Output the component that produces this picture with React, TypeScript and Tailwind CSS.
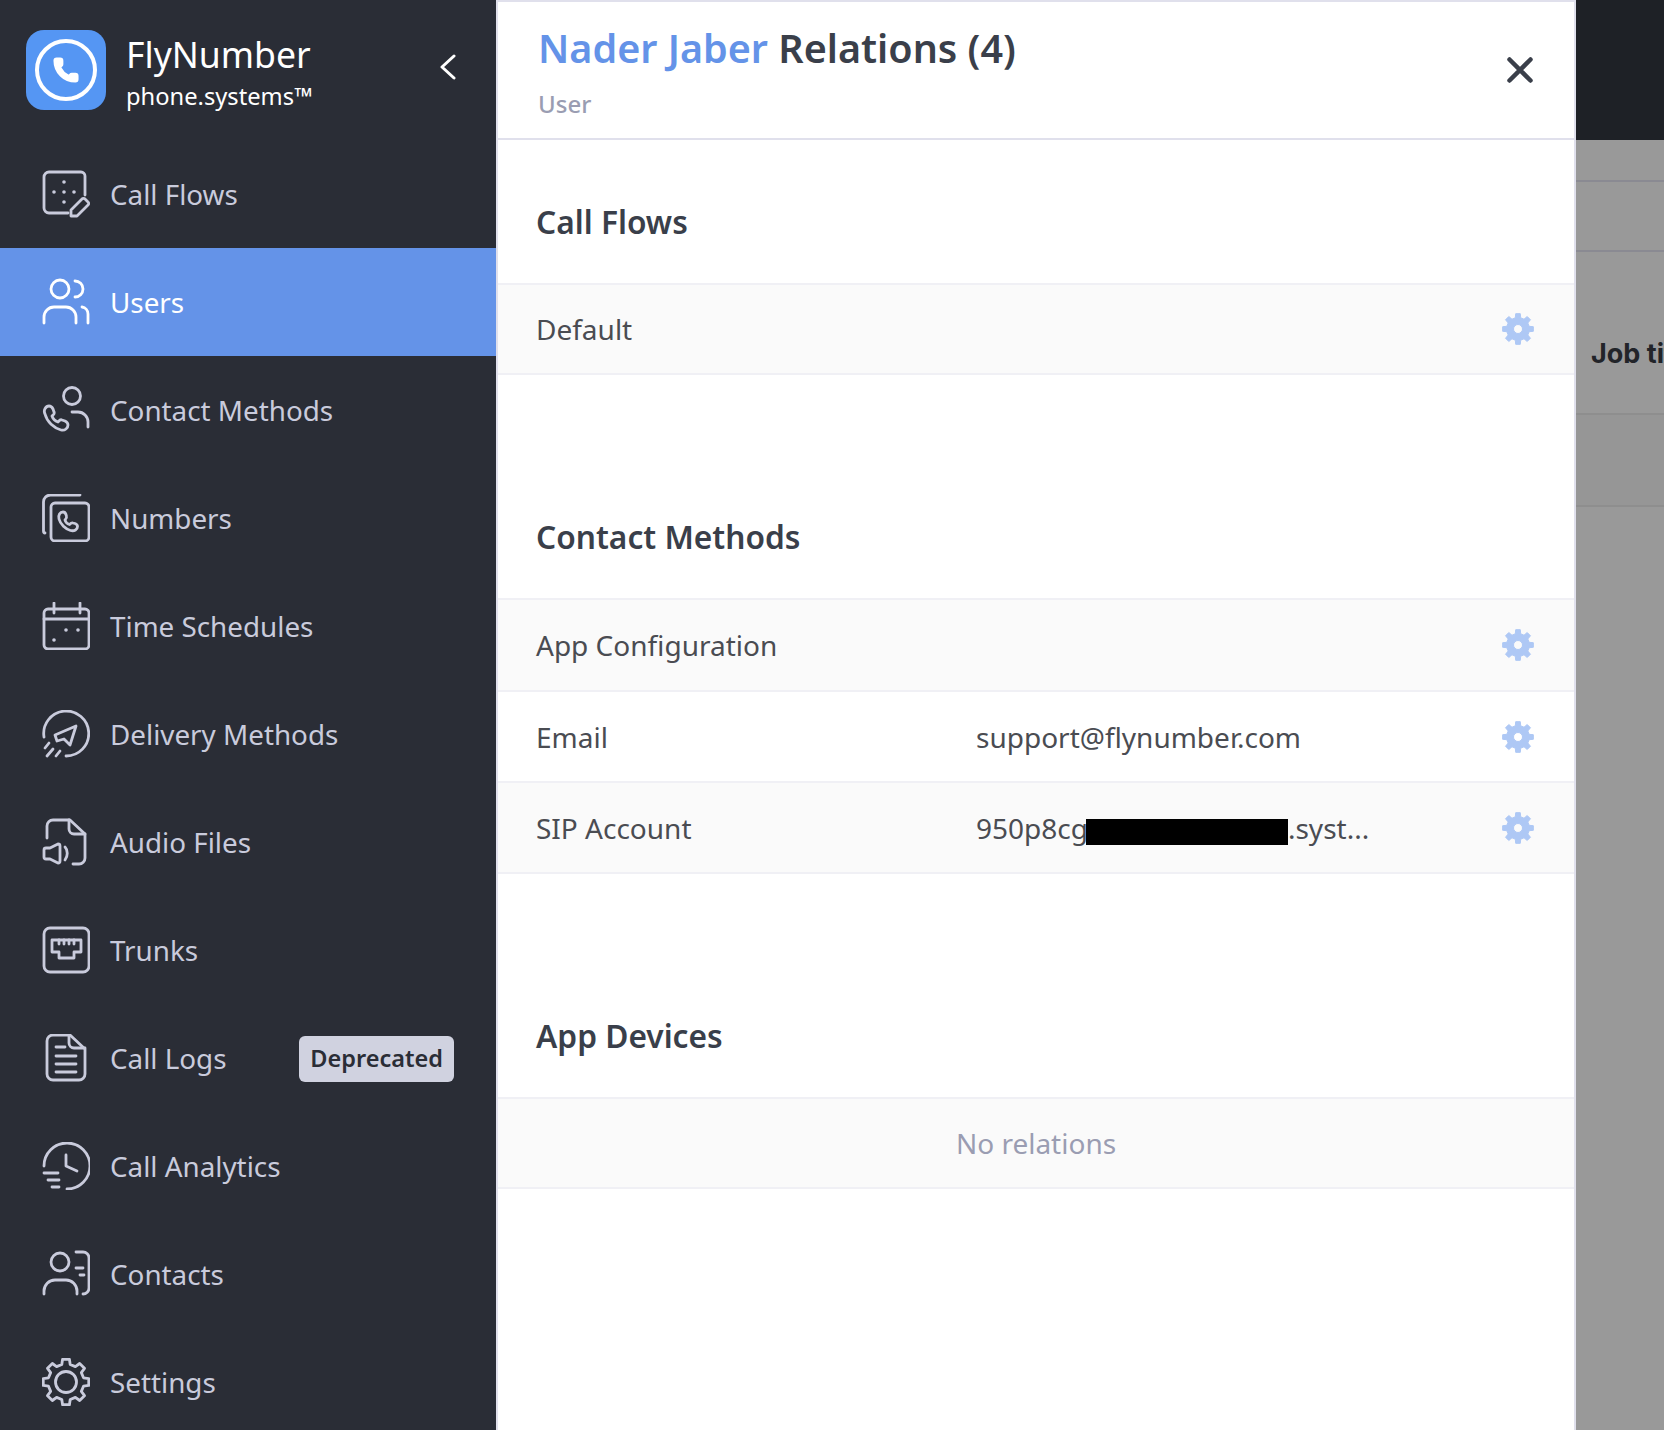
import React from "react";
import { Phone } from "lucide-react";

const gearPath = (teeth: number, cx: number, cy: number, outer: number, inner: number) => {
  const pts: string[] = [];
  const step = (Math.PI * 2) / teeth;
  for (let i = 0; i < teeth; i++) {
    const a = i * step - Math.PI / 2;
    const p = (r: number, da: number) =>
      `${(cx + r * Math.cos(a + da)).toFixed(2)} ${(cy + r * Math.sin(a + da)).toFixed(2)}`;
    pts.push(
      `${i === 0 ? "M" : "L"}${p(inner, -step * 0.3)}`,
      `L${p(outer, -step * 0.19)}`,
      `L${p(outer, step * 0.19)}`,
      `L${p(inner, step * 0.3)}`,
    );
  }
  return pts.join(" ") + "Z";
};

const Icon = ({ children }: { children: React.ReactNode }) => (
  <svg
    viewBox="0 0 48 48"
    fill="none"
    stroke="currentColor"
    strokeWidth="2.8"
    strokeLinecap="round"
    strokeLinejoin="round"
    className="h-12 w-12 shrink-0"
  >
    {children}
  </svg>
);

const Dot = ({ x, y }: { x: number; y: number }) => (
  <circle cx={x} cy={y} r="1.8" fill="currentColor" stroke="none" />
);

const icons: Record<string, React.ReactNode> = {
  flows: (
    <>
      <path d="M26 43H7a5 5 0 0 1-5-5V7a5 5 0 0 1 5-5h32a4 4 0 0 1 4 4v19" />
      <path d="M29 46v-6l11-11a2 2 0 0 1 3 0l3 3a2 2 0 0 1 0 3L35 46z" />
      <Dot x={22} y={12} />
      <Dot x={12} y={22} />
      <Dot x={22} y={22} />
      <Dot x={32} y={22} />
      <Dot x={22} y={32} />
    </>
  ),
  users: (
    <>
      <circle cx="18" cy="11" r="9" />
      <path d="M33 3a8 8 0 0 1 0 16" />
      <path d="M2 45v-6a10 10 0 0 1 10-10h12a10 10 0 0 1 10 10v6" />
      <path d="M40 29a7 7 0 0 1 6 7v9" />
    </>
  ),
  contact: (
    <>
      <circle cx="30" cy="10" r="8.5" />
      <path d="M30 26h6a10 10 0 0 1 10 10v5" />
      <path d="M3 28c-2-4 1-8 4-8 2 0 3 1 4 3l1 3c1 2-1 3-2 4 1 3 3 5 6 6 1-1 2-3 4-2l3 1c2 1 3 2 3 4 0 3-3 6-7 5-7-2-14-8-16-16z" />
    </>
  ),
  numbers: (
    <>
      <path d="M3 39c-1 0-1.5-1-1.5-2V8a7 7 0 0 1 7-7H38" />
      <rect x="9" y="9" width="38" height="38" rx="4" />
      <path d="M17 25c-1-4 1-7 4-7 1.5 0 2.500 1 3 2.500l.5 2c.5 1.500-.5 2.500-1.500 3.500 .5 2 2.500 4 4.500 4.500 1-1 2-2 3.500-1.500l2 .5c1.500.5 2.500 1.500 2.500 3 0 3-3 5-7 4-5-1.500-10-6-11.500-11.500z" />
    </>
  ),
  time: (
    <>
      <rect x="2" y="7" width="45" height="40" rx="4" />
      <path d="M2 17h45M12 1v10M38 1v10" />
      <Dot x={24} y={28} />
      <Dot x={36} y={28} />
      <Dot x={12} y={38} />
    </>
  ),
  delivery: (
    <>
      <path d="M2 27a22.500 22.500 0 1 1 22 19" />
      <path d="M13 25l21-9-6 19-6-6-7 2z" />
      <path d="M3 38l4-5M5 46l6-7M14 46l4-5" />
    </>
  ),
  audio: (
    <>
      <path d="M5 20V8a6 6 0 0 1 6-6h17l15 14v24a6 6 0 0 1-6 6h-6" />
      <path d="M27 2v9a5 5 0 0 0 5 5h11" />
      <path d="M2 32a2 2 0 0 1 2-2h4l8-4a2 2 0 0 1 2 2v15a2 2 0 0 1-2 2l-8-4H4a2 2 0 0 1-2-2z" />
      <path d="M23 29c3 3 3 9 0 13" />
    </>
  ),
  trunks: (
    <>
      <rect x="2" y="2" width="45" height="44" rx="6" />
      <path d="M10 14h29v12h-7v6H17v-6h-7z" />
      <path d="M17 14v4M22 14v4M27 14v4M32 14v4" />
    </>
  ),
  logs: (
    <>
      <path d="M28 1H11a6 6 0 0 0-6 6v33a6 6 0 0 0 6 6h26a6 6 0 0 0 6-6V15z" />
      <path d="M27 1v8a5 5 0 0 0 5 5h11" />
      <path d="M14 13h9M14 22h20M14 30h20M14 38h20" />
    </>
  ),
  analytics: (
    <>
      <path d="M2 24a23 23 0 1 1 23 23" />
      <path d="M24 13v11l11 5" />
      <path d="M2 31h14M6 38h11M10 45h7" />
    </>
  ),
  contacts: (
    <>
      <circle cx="18" cy="12" r="9" />
      <path d="M2 44v-3a11 11 0 0 1 11-11h11a11 11 0 0 1 11 11v3" />
      <path d="M34 2h7a6 6 0 0 1 6 6v30a6 6 0 0 1-6 6" />
      <path d="M34 18h7M38 25h4" />
    </>
  ),
  settings: (
    <>
      <path d={gearPath(8, 24, 24, 23, 18)} />
      <circle cx="24" cy="24" r="10.5" />
    </>
  ),
};

const navItems = [
  { key: "flows", label: "Call Flows" },
  { key: "users", label: "Users", active: true },
  { key: "contact", label: "Contact Methods" },
  { key: "numbers", label: "Numbers" },
  { key: "time", label: "Time Schedules" },
  { key: "delivery", label: "Delivery Methods" },
  { key: "audio", label: "Audio Files" },
  { key: "trunks", label: "Trunks" },
  { key: "logs", label: "Call Logs", badge: "Deprecated" },
  { key: "analytics", label: "Call Analytics" },
  { key: "contacts", label: "Contacts" },
  { key: "settings", label: "Settings" },
];

const Gear = () => (
  <svg viewBox="0 0 32 32" className="h-8 w-8 shrink-0 text-[#aec8f5]">
    <path
      fill="currentColor"
      fillRule="evenodd"
      stroke="currentColor"
      strokeWidth="1"
      strokeLinejoin="round"
      d={gearPath(8, 16, 16, 15.5, 11.5) + " M16 11.5a4.5 4.5 0 1 0 0 9a4.5 4.5 0 0 0 0-9Z"}
    />
  </svg>
);

const Row = ({
  name,
  value,
  odd,
  height = "h-[91px]",
}: {
  name: string;
  value?: React.ReactNode;
  odd?: boolean;
  height?: string;
}) => (
  <div
    className={
      "flex items-center border-b-2 border-[#f0f0f5] pl-[38px] pr-[40px] " +
      height +
      (odd ? " bg-[#fafafa]" : " bg-white")
    }
  >
    <span className="w-[440px] shrink-0">{name}</span>
    <span className="flex min-w-0 flex-1 items-center whitespace-nowrap">{value}</span>
    <Gear />
  </div>
);

const Section = ({ title, children }: { title: string; children: React.ReactNode }) => (
  <section className="mb-20">
    <h2 className="flex h-[143px] items-end pb-[39px] pl-[38px] text-[31.7px] font-semibold leading-[44px] text-[#3a3f4a]">
      {title}
    </h2>
    <div className="border-t-2 border-[#f0f0f5] text-[28px] text-[#4a4c52]">{children}</div>
  </section>
);

export default function App() {
  return (
    <div className="flex h-[1430px] overflow-hidden bg-[#999999] font-['Noto_Sans',sans-serif]">
      <aside className="w-[496px] shrink-0 bg-[#2a2d36]">
        <div className="flex h-[140px] items-start pl-[26px] pr-[40px] pt-[30px]">
          <div className="flex h-20 w-20 shrink-0 items-center justify-center rounded-[18px] bg-[#5596f3]">
            <div className="flex h-[62px] w-[62px] items-center justify-center rounded-full border-[4px] border-white">
              <Phone className="h-[28px] w-[28px] fill-white text-white" strokeWidth={1.5} />
            </div>
          </div>
          <div className="ml-5 flex-1 text-white">
            <div className="text-[35.6px] leading-[48px]">FlyNumber</div>
            <div className="mt-px text-[23.7px] leading-[34px]">phone.systems™</div>
          </div>
          <svg viewBox="0 0 16 26" fill="none" stroke="white" strokeWidth="3" strokeLinecap="round" strokeLinejoin="round" className="mt-[24px] h-[26px] w-4">
            <path d="M14 2L2 13l12 11" />
          </svg>
        </div>
        <nav className="flex flex-col">
          {navItems.map((item) => (
            <div
              key={item.key}
              className={
                "flex h-[108px] shrink-0 items-center pl-[42px] pr-[42px] text-[27.8px] " +
                (item.active ? "bg-[#6493e8] text-white" : "text-[#c9cbdc]")
              }
            >
              <Icon>{icons[item.key]}</Icon>
              <span className="ml-5 mt-[2px] flex-1">{item.label}</span>
              {item.badge && (
                <span className="mt-[2px] rounded-md bg-[#d0d2e0] px-[11px] py-[5px] text-[23.5px] font-semibold text-[#2a2d36]">
                  {item.badge}
                </span>
              )}
            </div>
          ))}
        </nav>
      </aside>

      <main className="w-[1080px] shrink-0 border-x-2 border-t-2 border-[#e0e0ec] bg-white">
        <header className="flex h-[138px] items-center justify-between border-b-2 border-[#e0e0ec] pl-10 pr-[41px]">
          <div className="pt-[3px]">
            <h1 className="text-[39.5px] font-semibold leading-[52px] text-[#3a3f4a]">
              <span className="text-[#6493e8]">Nader Jaber</span> Relations (4)
            </h1>
            <div className="mt-[12px] text-[24px] font-medium text-[#9a9db2]">User</div>
          </div>
          <svg viewBox="0 0 26 26" fill="none" stroke="#3a3f4a" strokeWidth="4.5" strokeLinecap="round" className="h-[26px] w-[26px]">
            <path d="M2.5 2.5l21 21M23.5 2.5l-21 21" />
          </svg>
        </header>

        <Section title="Call Flows">
          <div className="flex h-[90px] items-center border-b-2 border-[#f0f0f5] bg-[#fafafa] pl-[38px] pr-[40px]">
            <span className="flex-1">Default</span>
            <Gear />
          </div>
        </Section>

        <Section title="Contact Methods">
          <Row name="App Configuration" odd height="h-[92px]" />
          <Row name="Email" value="support@flynumber.com" />
          <Row
            name="SIP Account"
            odd
            value={
              <>
                950p8cg
                <span className="-ml-[2px] mt-2 h-[26px] w-[202px] bg-black" />
                .syst...
              </>
            }
          />
        </Section>

        <Section title="App Devices">
          <div className="flex h-[90px] items-center justify-center border-b-2 border-[#f0f0f5] bg-[#fafafa] text-[#9a9db2]">
            No relations
          </div>
        </Section>
      </main>

      <div className="min-w-0 flex-1 overflow-hidden font-['Inter',sans-serif]">
        <div className="h-[140px] bg-[#1e2126]" />
        <div className="h-[42px] border-b-2 border-[#8a8a92]" />
        <div className="h-[70px] border-b-2 border-[#8a8a92]" />
        <div className="flex h-[163px] items-center whitespace-nowrap border-b-2 border-[#8e8e8e] pl-[15px] pt-[44px] text-[27px] font-bold text-[#222429]">
          Job title
        </div>
        <div className="h-[92px] border-b-2 border-[#8e8e8e] bg-[#969696]" />
      </div>
    </div>
  );
}
